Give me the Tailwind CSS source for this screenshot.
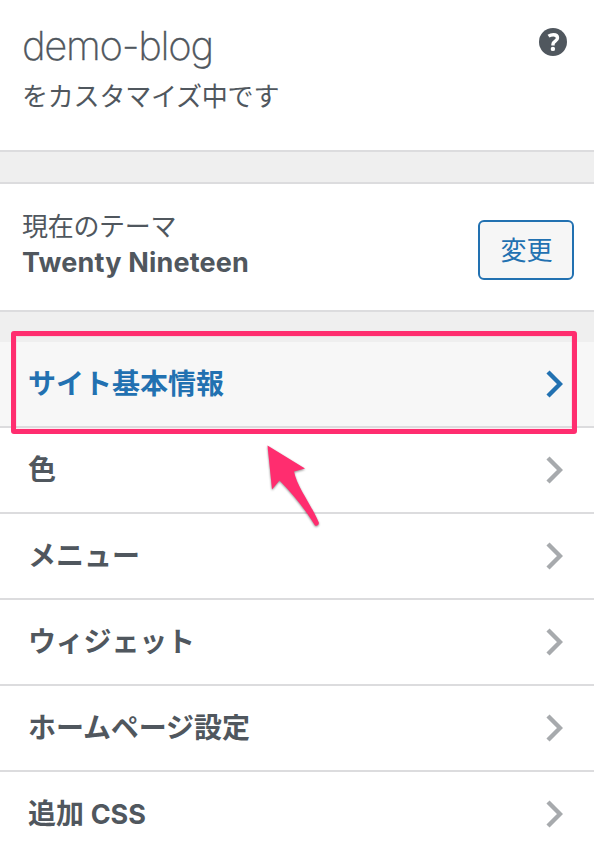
<!DOCTYPE html>
<html lang="ja">
<head>
    <meta charset="UTF-8">
    <meta name="viewport" content="width=device-width, initial-scale=1.0">
    <title>demo-blog をカスタマイズ中です</title>
    <script src="https://cdn.jsdelivr.net/npm/@tailwindcss/browser@4"></script>
</head>

<body class="relative h-[852px] overflow-hidden bg-[#efefef] text-[#50575e] font-['Inter','Noto_Sans_CJK_JP',sans-serif]">
  <header class="flex h-[152px] justify-between border-b-2 border-[#dcdcde] bg-white pl-[22px] pr-[27px]">
    <div class="pt-[22px]">
      <h1 class="text-[40px] leading-[48px] font-extralight tracking-[-1.3px] [-webkit-text-stroke:0.3px_currentColor]">demo-blog</h1>
      <p class="mt-[8px] text-[26px] leading-[38px] tracking-[-0.2px]">をカスタマイズ中です</p>
    </div>
    <button type="button" class="mt-[28px] h-[28px] w-[28px]">
      <svg class="h-[28px] w-[28px]" viewBox="0 0 28 28" fill="none">
        <circle cx="14" cy="14" r="14" fill="#50575e"></circle>
        <path d="M9.500 8.200C11 7.200 12.700 6.700 14.400 6.700c2.700 0 4.100 1.300 4.100 3.200 0 3.300-4.500 3-4.500 6.300v1.200" stroke="#fff" stroke-width="3.400"></path>
        <circle cx="13.900" cy="20.900" r="2.200" fill="#fff"></circle>
      </svg>
    </button>
  </header>

  <section class="mt-[30px] flex h-[130px] items-center justify-between border-y-2 border-[#dcdcde] bg-white pl-[22px] pr-[20px]">
    <div class="mb-[4px]">
      <p class="text-[26px] leading-[36px] tracking-[-0.3px]">現在のテーマ</p>
      <h2 class="text-[27px] leading-[36px] font-bold tracking-[0.18px]">Twenty Nineteen</h2>
    </div>
    <button type="button" class="mt-[6px] h-[60px] w-[96px] rounded-[6px] border-2 border-[#2271b1] bg-[#f6f6f6] pt-[2px] pl-px text-[26px] leading-[54px] text-[#2271b1]">変更</button>
  </section>

  <ul class="mt-[30px] text-[28px] leading-[84px] font-bold">
    <li class="flex h-[86px] items-center justify-between border-b-2 border-[#dcdcde] bg-[#f7f7f7] pl-[28px] pr-[31px] text-[#2271b1]">
      <span>サイト基本情報</span>
      <svg class="h-[28px] w-[17px]" viewBox="0 0 17 28" fill="none" stroke="currentColor" stroke-width="4.4"><path d="M2 2l12 12L2 26"></path></svg>
    </li>
    <li class="flex h-[86px] items-center justify-between border-b-2 border-[#dcdcde] bg-white pl-[28px] pr-[31px]">
      <span>色</span>
      <svg class="h-[28px] w-[17px] text-[#a7aaad]" viewBox="0 0 17 28" fill="none" stroke="currentColor" stroke-width="4.4"><path d="M2 2l12 12L2 26"></path></svg>
    </li>
    <li class="flex h-[86px] items-center justify-between border-b-2 border-[#dcdcde] bg-white pl-[28px] pr-[31px]">
      <span>メニュー</span>
      <svg class="h-[28px] w-[17px] text-[#a7aaad]" viewBox="0 0 17 28" fill="none" stroke="currentColor" stroke-width="4.4"><path d="M2 2l12 12L2 26"></path></svg>
    </li>
    <li class="flex h-[86px] items-center justify-between border-b-2 border-[#dcdcde] bg-white pl-[28px] pr-[31px]">
      <span class="tracking-[-0.2px]">ウィジェット</span>
      <svg class="h-[28px] w-[17px] text-[#a7aaad]" viewBox="0 0 17 28" fill="none" stroke="currentColor" stroke-width="4.4"><path d="M2 2l12 12L2 26"></path></svg>
    </li>
    <li class="flex h-[86px] items-center justify-between border-b-2 border-[#dcdcde] bg-white pl-[28px] pr-[31px]">
      <span class="tracking-[-0.1px]">ホームページ設定</span>
      <svg class="h-[28px] w-[17px] text-[#a7aaad]" viewBox="0 0 17 28" fill="none" stroke="currentColor" stroke-width="4.4"><path d="M2 2l12 12L2 26"></path></svg>
    </li>
    <li class="flex h-[86px] items-center justify-between border-b-2 border-[#dcdcde] bg-white pl-[28px] pr-[31px]">
      <span>追加 <span class="text-[27px]">CSS</span></span>
      <svg class="h-[28px] w-[17px] text-[#a7aaad]" viewBox="0 0 17 28" fill="none" stroke="currentColor" stroke-width="4.4"><path d="M2 2l12 12L2 26"></path></svg>
    </li>
  </ul>

  <!-- callout frame and pointer -->
  <div class="pointer-events-none absolute top-[331px] left-[11px] h-[103px] w-[566px] rounded-[3px] border-[5px] border-[#ff2d6f] ring-1 ring-[#ff2d6f]/10 ring-inset"></div>
  <svg class="pointer-events-none absolute top-[440px] left-[260px] h-[95px] w-[70px] drop-shadow-[0_1px_1px_rgba(0,0,0,0.45)]" viewBox="260 440 70 95">
    <path d="M267.5 445.5L305 468.5L294 471.5C297 487 311 504 319 523Q318.500 526.500 315 525.500C305 509 293 494 279.500 480.500L272 489.500Z" fill="#ff2d6f"></path>
  </svg>
</body>
</html>
